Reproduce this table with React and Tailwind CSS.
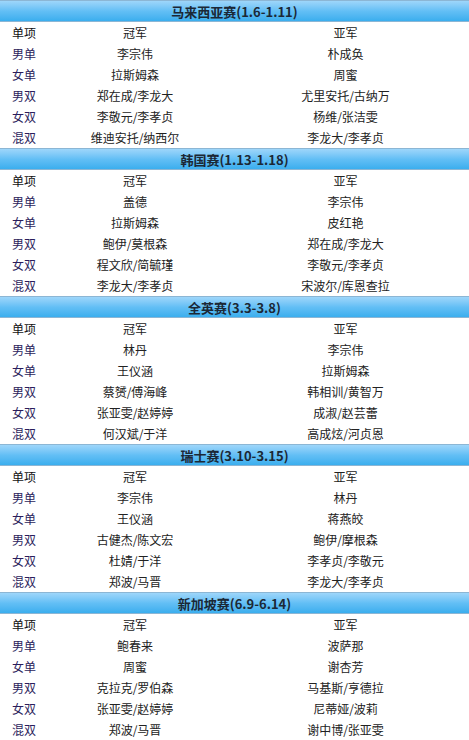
import React from "react";

const events = [
  {
    title: "马来西亚赛(1.6-1.11)",
    rows: [
      ["男单", "李宗伟", "朴成奂"],
      ["女单", "拉斯姆森", "周蜜"],
      ["男双", "郑在成/李龙大", "尤里安托/古纳万"],
      ["女双", "李敬元/李孝贞", "杨维/张洁雯"],
      ["混双", "维迪安托/纳西尔", "李龙大/李孝贞"],
    ],
  },
  {
    title: "韩国赛(1.13-1.18)",
    rows: [
      ["男单", "盖德", "李宗伟"],
      ["女单", "拉斯姆森", "皮红艳"],
      ["男双", "鲍伊/莫根森", "郑在成/李龙大"],
      ["女双", "程文欣/简毓瑾", "李敬元/李孝贞"],
      ["混双", "李龙大/李孝贞", "宋波尔/库恩查拉"],
    ],
  },
  {
    title: "全英赛(3.3-3.8)",
    rows: [
      ["男单", "林丹", "李宗伟"],
      ["女单", "王仪涵", "拉斯姆森"],
      ["男双", "蔡赟/傅海峰", "韩相训/黄智万"],
      ["女双", "张亚雯/赵婷婷", "成淑/赵芸蕾"],
      ["混双", "何汉斌/于洋", "高成炫/河贞恩"],
    ],
  },
  {
    title: "瑞士赛(3.10-3.15)",
    rows: [
      ["男单", "李宗伟", "林丹"],
      ["女单", "王仪涵", "蒋燕皎"],
      ["男双", "古健杰/陈文宏", "鲍伊/摩根森"],
      ["女双", "杜婧/于洋", "李孝贞/李敬元"],
      ["混双", "郑波/马晋", "李龙大/李孝贞"],
    ],
  },
  {
    title: "新加坡赛(6.9-6.14)",
    rows: [
      ["男单", "鲍春来", "波萨那"],
      ["女单", "周蜜", "谢杏芳"],
      ["男双", "克拉克/罗伯森", "马基斯/亨德拉"],
      ["女双", "张亚雯/赵婷婷", "尼蒂娅/波莉"],
      ["混双", "郑波/马晋", "谢中博/张亚雯"],
    ],
  },
];

function Row({ cells, head }) {
  return (
    <div className="grid grid-cols-[48px_174px_1fr] h-[21px] items-center text-[12px] leading-none">
      <div className={`text-center ${head ? "text-[#111]" : "text-[#2b1d5c]"}`}>{cells[0]}</div>
      <div className="text-center text-[#222]">{cells[1]}</div>
      <div className="text-center text-[#222]">{cells[2]}</div>
    </div>
  );
}

export default function App() {
  return (
    <div
      className="w-[469px] h-[740px] overflow-hidden bg-white"
      style={{ fontFamily: '"Noto Sans CJK SC", "Noto Sans", sans-serif' }}
    >
      {events.map((ev) => (
        <div key={ev.title} className="h-[148px]">
          {/* header bar */}
          <div className="h-[22px] border-y border-[#8cb6d4] bg-gradient-to-b from-[#9ed6fa] via-[#63bff5] to-[#3aaeee] flex items-center justify-center">
            <span className="text-[13px] font-bold text-[#1b2836] leading-none">{ev.title}</span>
          </div>
          <Row cells={["单项", "冠军", "亚军"]} head />
          {ev.rows.map((r) => (
            <Row key={r[0]} cells={r} />
          ))}
        </div>
      ))}
    </div>
  );
}
